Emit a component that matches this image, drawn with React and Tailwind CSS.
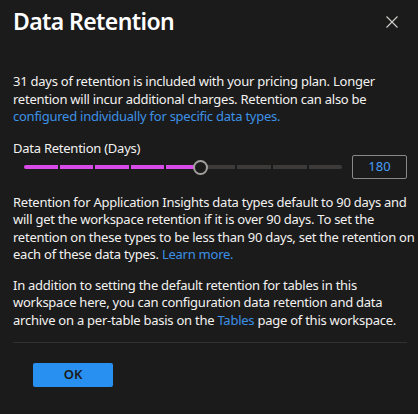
import React from 'react'

const font = { fontFamily: '"Noto Sans", "Open Sans", sans-serif' }

const ticks = [0, 1, 2, 3, 4, 5, 6, 7, 8]
const value = 5

const Slider = () => (
  <div className="flex items-center h-[24px]">
    <div className="relative flex-1 pl-[11px] pr-[10px] h-[24px] flex items-center">
      <div className="flex w-full gap-[2px] h-[4px]">
        {ticks.map((t) => (
          <div
            key={t}
            className={`flex-1 h-full ${t < value ? 'bg-[#d84be8]' : 'bg-[#3d3b3a]'} ${
              t === 0 ? 'rounded-l-full' : ''
            } ${t === ticks.length - 1 ? 'rounded-r-full' : ''}`}
          />
        ))}
      </div>
      <div className="absolute left-[180px] top-[5px] w-[15px] h-[15px] rounded-full border-2 border-[#a19f9d] bg-[#1b1b1b]" />
    </div>
    <div className="w-[55px] h-[24px] border border-[#8a8886] rounded-[2px] flex items-center justify-center text-[13px] text-[#479ef5]">
      180
    </div>
  </div>
)

export default function App() {
  return (
    <div
      className="w-[418px] h-[414px] bg-[#1b1b1b] text-[#f3f2f1] pl-[13px] pr-[11px] pt-[5px] overflow-hidden"
      style={font}
    >
      <div className="flex items-center justify-between">
        <h1 className="text-[23px] leading-[32px] font-semibold tracking-[-0.6px] text-white">
          Data Retention
        </h1>
        <button className="mr-[9px] mt-[2px] text-[#d2d0ce]">
          <svg width="12" height="12" viewBox="0 0 12 12" fill="none" stroke="currentColor" strokeWidth="1.1">
            <path d="M0.5 0.5 L11.5 11.5 M11.5 0.5 L0.5 11.5" />
          </svg>
        </button>
      </div>

      <p className="mt-[36px] text-[13px] leading-[17.5px] tracking-[-0.25px] whitespace-nowrap">
        31 days of retention is included with your pricing plan. Longer
        <br />
        retention will incur additional charges. Retention can also be
        <br />
        <a className="text-[#3c91e6]">configured individually for specific data types.</a>
      </p>

      <div className="mt-[15px] text-[13px] leading-[14px] tracking-[-0.25px]">Data Retention (Days)</div>
      <Slider />

      <p className="mt-[15px] text-[13px] leading-[17.5px] tracking-[-0.25px] whitespace-nowrap">
        Retention for Application Insights data types default to 90 days and
        <br />
        will get the workspace retention if it is over 90 days. To set the
        <br />
        retention on these types to be less than 90 days, set the retention on
        <br />
        each of these data types. <a className="text-[#3c91e6]">Learn more.</a>
      </p>

      <p className="mt-[13px] text-[13px] leading-[17.5px] tracking-[-0.25px] whitespace-nowrap">
        In addition to setting the default retention for tables in this
        <br />
        workspace here, you can configuration data retention and data
        <br />
        archive on a per-table basis on the <a className="text-[#3c91e6]">Tables</a> page of this
        workspace.
      </p>

      <div className="mt-[13px] border-t border-[#323130]" />

      <button className="mt-[20px] ml-[20px] w-[80px] h-[24px] rounded-[2px] bg-[#2890f0] text-[#1b1a19] text-[13px] font-semibold">
        OK
      </button>
    </div>
  )
}
